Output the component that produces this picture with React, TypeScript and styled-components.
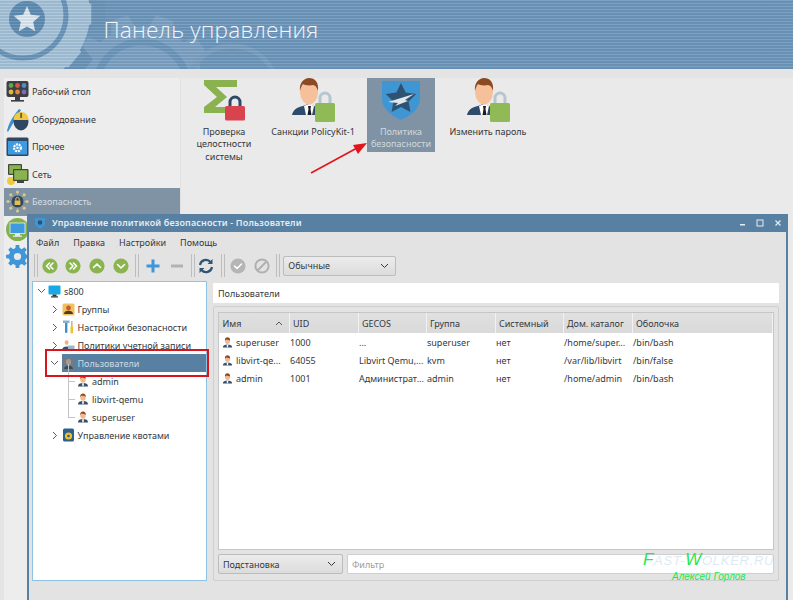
import React from 'react'
import styled, { createGlobalStyle } from 'styled-components'

const GlobalStyle = createGlobalStyle`
	html, body {
		margin: 0;
		padding: 0;
		height: 100%;
		overflow: hidden;
		background: #e4e4e4;
		font-family: 'Noto Sans', 'Open Sans', sans-serif;
		font-size: 9px;
		color: #33383c;
	}
	* { box-sizing: border-box; }
`

const Page = styled.div`
	position: relative;
	width: 793px;
	height: 600px;
	overflow: hidden;
`

/* ---------- header ---------- */
const Header = styled.header`
	position: relative;
	height: 69px;
	background: #6f97ba;
	overflow: hidden;
	display: flex;
	align-items: center;
	padding: 0 0 10px 103.500px;
	&::after {
		content: '';
		position: absolute;
		inset: 0;
		background: repeating-linear-gradient(
			to bottom,
			rgba(255, 255, 255, 0.1) 0 1px,
			rgba(40, 80, 120, 0.1) 1px 3px
		);
	}
`
const HeaderArt = styled.svg`
	position: absolute;
	left: 0;
	top: 0;
`
const HeaderTitle = styled.h1`
	position: relative;
	z-index: 1;
	margin: 0;
	font-family: 'Open Sans', 'Noto Sans', sans-serif;
	font-weight: 300;
	font-size: 22.6px;
	letter-spacing: 0.2px;
	color: #f2f6f9;
`

const gearPath = (cx: number, cy: number, r: number, R: number, n: number) => {
	const pts: string[] = []
	for (let i = 0; i < n; i++) {
		const step = (Math.PI * 2) / n
		const a = i * step
		const at = (rad: number, ang: number) =>
			`${(cx + rad * Math.cos(ang)).toFixed(1)},${(cy + rad * Math.sin(ang)).toFixed(1)}`
		pts.push(at(r, a - step * 0.32), at(R, a - step * 0.2), at(R, a + step * 0.2), at(r, a + step * 0.32))
	}
	return 'M' + pts.join('L') + 'Z'
}

const starPoints = (cx: number, cy: number, R: number, r: number) => {
	const pts: string[] = []
	for (let i = 0; i < 10; i++) {
		const a = -Math.PI / 2 + (i * Math.PI) / 5
		const d = i % 2 ? r : R
		pts.push(`${(cx + d * Math.cos(a)).toFixed(1)},${(cy + d * Math.sin(a)).toFixed(1)}`)
	}
	return pts.join(' ')
}

const HeaderDecor = () => (
	<HeaderArt width="420" height="69" viewBox="0 0 420 69">
		<path d={gearPath(142, 88, 62, 74, 10)} fill="#7ea2c2" />
		<circle cx="142" cy="88" r="46" fill="none" stroke="#6d96b9" strokeWidth="7" />
		<circle cx="232" cy="92" r="46" fill="none" stroke="#7b9fbf" strokeWidth="5" />
		<path d={gearPath(20, 14, 70, 86, 9)} fill="#6b94b7" />
		<circle cx="20" cy="14" r="70" fill="#a9c4d9" />
		<path d={gearPath(20, 14, 62, 72, 9)} fill="#a9c4d9" />
		<circle cx="23" cy="15" r="43" fill="none" stroke="#6a94b8" strokeWidth="5" />
		<circle cx="27" cy="19" r="18" fill="#5f8cb0" />
		<polygon points={starPoints(27, 20, 14, 6.5)} fill="#e1eaf1" />
	</HeaderArt>
)

/* ---------- control panel ---------- */
const Workspace = styled.div`
	display: flex;
	height: 522px;
	margin-top: 9px;
	padding-left: 4px;
`
const Sidebar = styled.nav`
	width: 177px;
	background: #ededed;
	border-right: 1px solid #e2e2e2;
`
const SideRow = styled.div<{ $active?: boolean }>`
	display: flex;
	align-items: center;
	gap: 3px;
	height: 27.5px;
	padding-left: 2px;
	font-size: 9px;
	color: ${p => (p.$active ? '#d5dce2' : '#33383c')};
	background: ${p => (p.$active ? '#7f93a5' : 'transparent')};
`
const Launcher = styled.section`
	flex: 1;
	display: flex;
	align-items: flex-start;
	background: #eaeaea;
	padding-left: 10px;
`
const Tile = styled.div<{ $width: number; $before?: number; $active?: boolean }>`
	width: ${p => p.$width}px;
	margin-left: ${p => p.$before ?? 0}px;
	height: 74px;
	display: flex;
	flex-direction: column;
	align-items: center;
	text-align: center;
	line-height: 12.4px;
	font-size: 9px;
	background: ${p => (p.$active ? '#7f93a5' : 'transparent')};
	color: ${p => (p.$active ? '#d0d8de' : '#33383c')};
	svg { margin-bottom: 4px; flex: none; overflow: visible; }
`

const AgentIcon = () => (
	<svg width="46" height="44" viewBox="0 0 46 44">
		<path d="M2 37c1-5 5-8 11-9l5-2 6 2c3 1 5 2 6 4v5z" fill="#2f4b6b" />
		<path d="M14 28l5-2 5 2-2 9h-6z" fill="#fff" />
		<path d="M18 28h3l-.5 3 1 6h-4l1-6z" fill="#1b1d22" />
		<ellipse cx="19" cy="14" rx="9" ry="12.5" fill="#f6c19a" />
		<path d="M10 13C9 5 14 0 19 0c6 0 10 4 9 13-1-4-3-6-5-6-4 1-9 0-10-1-1 1-2 3-3 7z" fill="#8c4a22" />
		<path d="M30 26v-6a5 5 0 0 1 10 0v6" fill="none" stroke="#b5c6cf" strokeWidth="3" />
		<rect x="25" y="25" width="20" height="19" rx="1.5" fill="#8fba56" />
	</svg>
)

const SigmaIcon = () => (
	<svg width="46" height="44" viewBox="-3 -2 46 44">
		<path d="M0 0h33v7H12l11 10-12 10h10v6H0v-6l13-10L0 5z" fill="#8ab24f" />
		<path d="M26 27v-5a5 5 0 0 1 10 0v5" fill="none" stroke="#2b4a6a" strokeWidth="3" />
		<rect x="21" y="26" width="20" height="14.500" rx="1.5" fill="#d9434e" />
	</svg>
)

const ShieldIcon = () => (
	<svg width="46" height="44" viewBox="0 0 46 44">
		<path d="M4 3h38v18c0 10-10 17-19 21C14 38 4 31 4 21z" fill="#3f96d3" />
		<polygon points={starPoints(23, 21, 16, 8)} fill="#2e5272" />
		<path d="M10 24l26-8-9 6 3 1-13 5 3-3z" fill="#dfe7ec" />
	</svg>
)

/* ---------- sidebar icons ---------- */
const DesktopGlyph = () => (
	<svg width="23" height="23" viewBox="0 0 23 23">
		<rect x="0.5" y="1" width="22" height="16" rx="2" fill="#3d3f45" />
		<rect x="9" y="17" width="5" height="3" fill="#3d3f45" />
		<rect x="5" y="20" width="13" height="1.6" fill="#3d3f45" />
		{['#5fa84b', '#d9574a', '#4a90c8', '#e0b93c', '#e48a35', '#7a6fb5'].map((c, i) => (
			<circle key={c} cx={5 + (i % 3) * 6.5} cy={5.5 + Math.floor(i / 3) * 6.5} r="2.4" fill={c} />
		))}
	</svg>
)
const MouseGlyph = () => (
	<svg width="23" height="27" viewBox="0 0 23 27">
		<path d="M1 25c1-6 5-14 12-22l2 1c-5 8-9 15-13 22z" fill="#3d8fd0" />
		<ellipse cx="15" cy="15.5" rx="7.5" ry="9" fill="#2f4763" />
		<path d="M7.6 14c0-5 3-8 7.4-8s7.4 3 7.4 8z" fill="#f0c93e" />
		<rect x="14.4" y="7" width="1.4" height="5" fill="#2f4763" />
	</svg>
)
const WindowGlyph = () => (
	<svg width="23" height="20" viewBox="0 0 23 20">
		<rect x="0.5" y="0.5" width="22" height="18.5" rx="1.5" fill="#2f4763" />
		<rect x="2" y="4" width="19" height="13.5" fill="#3f9be0" />
		<circle cx="11.5" cy="10.8" r="3.4" fill="none" stroke="#fff" strokeWidth="2.2" strokeDasharray="2 0.8" />
		<circle cx="11.5" cy="10.8" r="1.2" fill="#fff" />
	</svg>
)
const NetworkGlyph = () => (
	<svg width="23" height="23" viewBox="0 0 23 23">
		<circle cx="5" cy="18" r="4" fill="#f0c93e" />
		<rect x="2" y="1" width="14" height="11" rx="1" fill="#3d4a3a" />
		<rect x="3.2" y="2.2" width="11.6" height="8.6" fill="#8ab24f" />
		<rect x="7" y="6" width="15.5" height="12" rx="1" fill="#3d4a3a" />
		<rect x="8.2" y="7.2" width="13" height="9.6" fill="#8ab24f" />
		<rect x="11" y="18" width="7" height="2" fill="#3d4a3a" />
	</svg>
)
const SecurityGlyph = () => (
	<svg width="23" height="23" viewBox="0 0 23 23">
		{[0, 1, 2, 3, 4, 5, 6, 7].map(i => {
			const a = (i * Math.PI) / 4
			return (
				<g key={i}>
					<line
						x1={11.5}
						y1={11.5}
						x2={11.5 + 9.5 * Math.cos(a)}
						y2={11.5 + 9.5 * Math.sin(a)}
						stroke="#c8b77a"
						strokeWidth="0.8"
					/>
					<circle cx={11.5 + 9.5 * Math.cos(a)} cy={11.5 + 9.5 * Math.sin(a)} r="1.6" fill="#d8c88c" />
				</g>
			)
		})}
		<circle cx="11.5" cy="11.5" r="6" fill="#2f4763" />
		<rect x="8.6" y="10.5" width="5.8" height="4.5" fill="#e6c04a" />
		<path d="M9.8 10.5V9a1.7 1.7 0 0 1 3.4 0v1.5" fill="none" stroke="#e6c04a" strokeWidth="1" />
	</svg>
)
const MonitorGlyph = () => (
	<svg width="23" height="23" viewBox="0 0 23 23">
		<circle cx="11.5" cy="11.5" r="11.5" fill="#83b04c" />
		<rect x="4" y="5" width="15" height="10.5" fill="#3f9be0" stroke="#e8eef2" strokeWidth="0.8" />
		<rect x="9" y="15.5" width="5" height="2.4" fill="#e8eef2" />
		<rect x="7" y="17.6" width="9" height="1.2" fill="#e8eef2" />
	</svg>
)
const GearGlyph = () => (
	<svg width="23" height="23" viewBox="0 0 23 23">
		<path d={gearPath(11.5, 11.5, 8.5, 11.5, 8)} fill="#3f96d9" />
		<circle cx="11.5" cy="11.5" r="8.6" fill="#3f96d9" />
		<circle cx="11.5" cy="11.5" r="3.6" fill="#e9e9e9" />
	</svg>
)

/* ---------- policy window ---------- */
const PolicyWindow = styled.div`
	position: absolute;
	left: 27px;
	top: 214px;
	width: 761px;
	height: 390px;
	background: #e3e3e3;
	border: 2px solid #5880a3;
	border-top: none;
	display: flex;
	flex-direction: column;
`
const TitleBar = styled.div`
	height: 18px;
	flex: none;
	margin: 0 -2px;
	background: #5880a3;
	color: #e6edf2;
	display: flex;
	align-items: center;
	padding: 0 6px 1px 7px;
	font-size: 9px;
	font-weight: 600;
	letter-spacing: 0.14px;
	gap: 6px;
`
const WindowControls = styled.div`
	margin-left: auto;
	display: flex;
	align-items: center;
	gap: 10px;
	color: #e6edf2;
	svg { display: block; }
`
const MenuBar = styled.div`
	height: 20px;
	flex: none;
	display: flex;
	align-items: center;
	padding-left: 7px;
	gap: 14px;
	font-size: 9px;
`
const Toolbar = styled.div`
	height: 28px;
	flex: none;
	display: flex;
	align-items: center;
	padding: 0 0 1px 3px;
`
const Grip = styled.span`
	width: 4px;
	height: 23px;
	border-left: 1px solid #bdbdbd;
	border-right: 1px solid #bdbdbd;
	margin-left: 2px;
	flex: none;
`
const ToolButton = styled.span`
	width: 23.6px;
	height: 24px;
	flex: none;
	display: flex;
	align-items: center;
	justify-content: center;
`
const ToolGroup = styled.div<{ $lead?: number; $trail?: number }>`
	display: flex;
	align-items: center;
	padding-left: ${p => p.$lead ?? 0}px;
	padding-right: ${p => p.$trail ?? 1}px;
`
const Dropdown = styled.div<{ $width: number; $before?: number }>`
	width: ${p => p.$width}px;
	height: 20px;
	flex: none;
	margin-left: ${p => p.$before ?? 0}px;
	display: flex;
	align-items: center;
	justify-content: space-between;
	padding: 0 6px 0 4px;
	background: linear-gradient(#ececec, #dcdcdc);
	border: 1px solid #bcbcbc;
	border-radius: 2px;
	font-size: 9px;
`
const Split = styled.div`
	display: flex;
	gap: 6px;
	padding: 1px 7px 0 3px;
`
const TreePane = styled.div`
	width: 175px;
	height: 300px;
	flex: none;
	background: #fff;
	border: 1px solid #8fc3e6;
`
const TreeRow = styled.div<{ $level: number }>`
	height: 18px;
	display: flex;
	align-items: center;
	gap: 2px;
	padding-left: ${p => 3 + p.$level * 13.5}px;
	font-size: 9px;
	color: #33383c;
`
const Chevron = styled.span`
	width: 10px;
	flex: none;
	display: flex;
	justify-content: center;
	color: #55595d;
	svg { display: block; }
`
const TreeText = styled.span`
	margin-left: 1px;
	white-space: nowrap;
`
const TreeLabel = styled.span`
	display: flex;
	align-items: center;
	gap: 3px;
	height: 18px;
	flex: 1;
	background: #5880a3;
	color: #cfdae3;
`
const Leaf = styled.span`
	position: relative;
	width: 7px;
	height: 1px;
	background: #c4c4c4;
	flex: none;
	margin-left: 5px;
	&::before {
		content: '';
		position: absolute;
		left: 0;
		bottom: 0;
		width: 1px;
		height: 18px;
		background: #c4c4c4;
	}
`
const Highlight = styled.div`
	position: absolute;
	left: 45px;
	top: 349px;
	width: 164px;
	height: 28px;
	border: 2px solid #d8141c;
`
const RightPane = styled.div`
	flex: 1;
	display: flex;
	flex-direction: column;
	gap: 3px;
	padding-top: 2px;
`
const PathField = styled.div`
	height: 20px;
	background: #fff;
	border-radius: 1px;
	display: flex;
	align-items: center;
	padding-left: 5px;
	font-size: 9px;
`
const GroupBox = styled.div`
	height: 275px;
	border: 1px solid #cfcfcf;
	border-radius: 2px;
	padding: 5px 4px 0;
	display: flex;
	flex-direction: column;
	gap: 4px;
`
const TableFrame = styled.div`
	height: 238px;
	background: #fff;
	border: 1px solid #c6c6c6;
	flex: none;
`
const UsersTable = styled.table`
	width: 100%;
	table-layout: fixed;
	border-collapse: collapse;
	font-size: 9px;
`
const HeadCell = styled.th`
	height: 20px;
	padding: 0 0 0 3.500px;
	background: linear-gradient(#e0e0e0, #d9d9d9);
	border-right: 1px solid #f2f2f2;
	font-weight: 400;
	text-align: left;
	color: #33383c;
	white-space: nowrap;
`
const HeadInner = styled.span`
	display: flex;
	justify-content: space-between;
	align-items: center;
	padding-right: 6px;
`
const BodyCell = styled.td`
	height: 18px;
	padding: 0 0 0 1px;
	white-space: nowrap;
	overflow: hidden;
	&:first-child { padding-left: 3px; }
`
const NameCell = styled.span`
	display: flex;
	align-items: center;
	gap: 3px;
`
const Footer = styled.div`
	display: flex;
	gap: 4px;
`
const FilterField = styled.div`
	flex: 1;
	height: 20px;
	background: #fff;
	border: 1px solid #cfcfcf;
	border-radius: 2px;
	display: flex;
	align-items: center;
	padding-left: 4px;
	color: #9b9b9b;
	font-size: 9px;
`

/* ---------- overlays ---------- */
const ArrowArt = styled.svg`
	position: absolute;
	left: 305px;
	top: 138px;
`
const Watermark = styled.div`
	position: absolute;
	left: 643px;
	top: 551px;
	font-family: 'Liberation Sans', sans-serif;
	font-style: italic;
	font-size: 13px;
	line-height: 18px;
	letter-spacing: 0.7px;
	color: rgba(190, 215, 235, 0.55);
	white-space: nowrap;
`
const WatermarkLead = styled.span`
	color: #22e84f;
	font-size: 17px;
`
const Signature = styled.div`
	position: absolute;
	left: 672px;
	top: 571px;
	font-family: 'Liberation Sans', sans-serif;
	font-style: italic;
	font-size: 10px;
	color: #22e84f;
	white-space: nowrap;
`

const Person = ({ size = 12 }: { size?: number }) => (
	<svg width={size} height={size} viewBox="0 0 12 12" style={{ flex: 'none' }}>
		<path d="M1 11.5c0-2.6 2-3.4 5-3.4s5 .8 5 3.4z" fill="#34506c" />
		<path d="M5 8.2h2l-.4 3H5.4z" fill="#fff" />
		<ellipse cx="6" cy="4.4" rx="2.7" ry="3.3" fill="#f2b98f" />
		<path d="M3.2 4c-.2-2.4 1.2-3.6 2.8-3.6S9 1.6 8.8 4C8 3 6 3 5 2.6 4.4 3 3.8 3.2 3.2 4z" fill="#8c4a22" />
	</svg>
)

const TreeGlyph = ({ kind }: { kind: string }) => {
	if (kind === 'host')
		return (
			<svg width="13" height="13" viewBox="0 0 13 13">
				<rect x="0.5" y="0.5" width="12" height="9" rx="1" fill="#17a8e6" />
				<rect x="4.5" y="9.5" width="4" height="2" fill="#333" />
				<rect x="3" y="11.3" width="7" height="1.2" fill="#333" />
			</svg>
		)
	if (kind === 'groups')
		return (
			<svg width="13" height="13" viewBox="0 0 13 13">
				<rect x="0.5" y="0.5" width="12" height="12" rx="1.5" fill="#efc35a" />
				<circle cx="6.5" cy="5" r="2.4" fill="#c9573c" />
				<path d="M2 11c0-2.4 2-3.2 4.5-3.2S11 8.6 11 11z" fill="#54382c" />
			</svg>
		)
	if (kind === 'tools')
		return (
			<svg width="13" height="14" viewBox="0 0 13 14">
				<rect x="3" y="1" width="2.4" height="12" rx="1" fill="#3f8fd0" />
				<rect x="1" y="0.5" width="6.5" height="2.5" fill="#8ab0cf" />
				<rect x="8.5" y="6" width="2.6" height="7.5" rx="1" fill="#f0c12e" />
				<rect x="9" y="1" width="1.6" height="5" fill="#b8b8b8" />
			</svg>
		)
	if (kind === 'account')
		return (
			<svg width="13" height="13" viewBox="0 0 14 13">
				<ellipse cx="5" cy="3.4" rx="2.1" ry="2.6" fill="#e9b48c" />
				<path d="M0 12c0-3 2-4.4 5-4.4s5 1.4 5 4.4z" fill="#34506c" />
				<rect x="6.5" y="6.5" width="7" height="5" fill="#9fb6c8" />
			</svg>
		)
	if (kind === 'users')
		return (
			<svg width="13" height="13" viewBox="0 0 13 13">
				<rect x="0.5" y="0.5" width="12" height="12" rx="1.5" fill="#6d7c8a" />
				<ellipse cx="6.5" cy="5" rx="2.6" ry="3" fill="#a89a8c" />
				<path d="M2 12c0-2.4 2-3.2 4.5-3.2S11 9.6 11 12z" fill="#3d4a58" />
			</svg>
		)
	return (
		<svg width="13" height="14" viewBox="0 0 13 14">
			<rect x="1" y="0.5" width="11" height="13" rx="1.5" fill="#2f5f8c" />
			<circle cx="6.5" cy="8" r="3.6" fill="#f0c12e" />
			<circle cx="6.5" cy="8" r="1.3" fill="#2f5f8c" />
		</svg>
	)
}

const Down = () => (
	<svg width="9" height="6" viewBox="0 0 9 6">
		<path d="M1 1l3.5 3.5L8 1" fill="none" stroke="currentColor" strokeWidth="1" />
	</svg>
)
const Right = () => (
	<svg width="6" height="9" viewBox="0 0 6 9">
		<path d="M1 1l3.5 3.5L1 8" fill="none" stroke="currentColor" strokeWidth="1" />
	</svg>
)

const RoundTool = ({ d, fill = '#8ab54e' }: { d: string; fill?: string }) => (
	<svg width="16" height="16" viewBox="0 0 16 16">
		<circle cx="8" cy="8" r="7.6" fill={fill} />
		<path d={d} fill="none" stroke="#fff" strokeWidth="1.6" strokeLinecap="round" strokeLinejoin="round" />
	</svg>
)

const columns = [70, 69, 68, 69, 68, 69]
const heads = ['UID', 'GECOS', 'Группа', 'Системный', 'Дом. каталог', 'Оболочка']
const users = [
	['superuser', '1000', '...', 'superuser', 'нет', '/home/super...', '/bin/bash'],
	['libvirt-qe...', '64055', 'Libvirt Qemu,...', 'kvm', 'нет', '/var/lib/libvirt', '/bin/false'],
	['admin', '1001', 'Администрат...', 'admin', 'нет', '/home/admin', '/bin/bash'],
]

export default function App() {
	return (
		<Page>
			<GlobalStyle />
			<Header>
				<HeaderDecor />
				<HeaderTitle>Панель управления</HeaderTitle>
			</Header>

			<Workspace>
				<Sidebar>
					<SideRow><DesktopGlyph />Рабочий стол</SideRow>
					<SideRow><MouseGlyph />Оборудование</SideRow>
					<SideRow><WindowGlyph />Прочее</SideRow>
					<SideRow><NetworkGlyph />Сеть</SideRow>
					<SideRow $active><SecurityGlyph />Безопасность</SideRow>
					<SideRow><MonitorGlyph /></SideRow>
					<SideRow><GearGlyph /></SideRow>
				</Sidebar>
				<Launcher>
					<Tile $width={66}><SigmaIcon />Проверка целостности системы</Tile>
					<Tile $width={86} $before={13}><AgentIcon />Санкции PolicyKit-1</Tile>
					<Tile $width={68} $before={11} $active><ShieldIcon />Политика безопасности</Tile>
					<Tile $width={84} $before={11}><AgentIcon />Изменить пароль</Tile>
				</Launcher>
			</Workspace>

			<ArrowArt width="70" height="40" viewBox="0 0 70 40">
				<line x1="6" y1="35" x2="52" y2="10" stroke="#e2141c" strokeWidth="1.6" />
				<path d="M62 5L48 7l5 9z" fill="#e2141c" />
			</ArrowArt>

			<PolicyWindow>
				<TitleBar>
					<svg width="12" height="12" viewBox="0 0 12 12">
						<path d="M1 1h10v5c0 3-3 4.600-5 5.500C4 10.600 1 9 1 6z" fill="#3f96d3" />
						<circle cx="6" cy="5.500" r="2.300" fill="#2e5272" />
					</svg>
					Управление политикой безопасности - Пользователи
					<WindowControls>
						<svg width="7" height="7" viewBox="0 0 7 7"><rect x="1" y="5" width="5" height="1.500" fill="currentColor" /></svg>
						<svg width="8" height="8" viewBox="0 0 8 8"><rect x="1" y="1" width="6" height="6" fill="none" stroke="currentColor" /></svg>
						<svg width="8" height="8" viewBox="0 0 8 8"><path d="M1.500 1.500l5 5M6.500 1.500l-5 5" stroke="currentColor" strokeWidth="1.200" /></svg>
					</WindowControls>
				</TitleBar>
				<MenuBar>
					<span>Файл</span>
					<span>Правка</span>
					<span>Настройки</span>
					<span>Помощь</span>
				</MenuBar>
				<Toolbar>
					<Grip />
					<ToolGroup>
						<ToolButton><RoundTool d="M7.500 5L4.500 8l3 3M11 5L8 8l3 3" /></ToolButton>
						<ToolButton><RoundTool d="M5 5l3 3-3 3M8.500 5l3 3-3 3" /></ToolButton>
						<ToolButton><RoundTool d="M4.500 9.500L8 6l3.500 3.500" /></ToolButton>
						<ToolButton><RoundTool d="M4.500 6.500L8 10l3.500-3.500" /></ToolButton>
					</ToolGroup>
					<Grip />
					<ToolGroup $lead={2} $trail={0}>
						<ToolButton>
							<svg width="14" height="14" viewBox="0 0 14 14"><path d="M7 0.500v13M0.500 7h13" stroke="#3f96d9" strokeWidth="3" /></svg>
						</ToolButton>
						<ToolButton>
							<svg width="14" height="14" viewBox="0 0 14 14"><path d="M1 7h12" stroke="#b2b2b2" strokeWidth="3" /></svg>
						</ToolButton>
					</ToolGroup>
					<Grip />
					<ToolGroup>
						<ToolButton>
							<svg width="16" height="16" viewBox="0 0 16 16">
								<path d="M2 7a6 6 0 0 1 10.500-3M14 9a6 6 0 0 1-10.500 3" fill="none" stroke="#2f5573" strokeWidth="2.200" />
								<path d="M14.500 1v5h-5zM1.500 15v-5h5z" fill="#2f5573" />
							</svg>
						</ToolButton>
					</ToolGroup>
					<Grip />
					<ToolGroup $lead={1}>
						<ToolButton><RoundTool fill="#b5b5b5" d="M4.500 8l2.500 2.500 4.500-4.500" /></ToolButton>
						<ToolButton>
							<svg width="16" height="16" viewBox="0 0 16 16">
								<circle cx="8" cy="8" r="6.600" fill="none" stroke="#b0b0b0" strokeWidth="2" />
								<path d="M3.500 12.500l9-9" stroke="#b0b0b0" strokeWidth="2" />
							</svg>
						</ToolButton>
					</ToolGroup>
					<Grip />
					<Dropdown $width={113} $before={3}>Обычные<Down /></Dropdown>
				</Toolbar>
				<Split>
					<TreePane>
						<TreeRow $level={0}><Chevron><Down /></Chevron><TreeGlyph kind="host" /><TreeText>s800</TreeText></TreeRow>
						<TreeRow $level={1}><Chevron><Right /></Chevron><TreeGlyph kind="groups" /><TreeText>Группы</TreeText></TreeRow>
						<TreeRow $level={1}><Chevron><Right /></Chevron><TreeGlyph kind="tools" /><TreeText>Настройки безопасности</TreeText></TreeRow>
						<TreeRow $level={1}><Chevron><Right /></Chevron><TreeGlyph kind="account" /><TreeText>Политики учетной записи</TreeText></TreeRow>
						<TreeRow $level={1}>
							<Chevron><Down /></Chevron>
							<TreeLabel><TreeGlyph kind="users" />Пользователи</TreeLabel>
						</TreeRow>
						<TreeRow $level={2}><Leaf /><Person /><TreeText>admin</TreeText></TreeRow>
						<TreeRow $level={2}><Leaf /><Person /><TreeText>libvirt-qemu</TreeText></TreeRow>
						<TreeRow $level={2}><Leaf /><Person /><TreeText>superuser</TreeText></TreeRow>
						<TreeRow $level={1}><Chevron><Right /></Chevron><TreeGlyph kind="quota" /><TreeText>Управление квотами</TreeText></TreeRow>
					</TreePane>
					<RightPane>
						<PathField>Пользователи</PathField>
						<GroupBox>
							<TableFrame>
								<UsersTable>
									<colgroup>
										{columns.map((w, i) => <col key={i} style={{ width: w }} />)}
										<col />
									</colgroup>
									<thead>
										<tr>
											<HeadCell>
												<HeadInner>
													Имя
													<svg width="8" height="5" viewBox="0 0 8 5"><path d="M1 4l3-3 3 3" fill="none" stroke="#55595d" /></svg>
												</HeadInner>
											</HeadCell>
											{heads.map(h => <HeadCell key={h}>{h}</HeadCell>)}
										</tr>
									</thead>
									<tbody>
										{users.map(row => (
											<tr key={row[0]}>
												{row.map((cell, i) => (
													<BodyCell key={i}>
														{i === 0 ? <NameCell><Person size={11} />{cell}</NameCell> : cell}
													</BodyCell>
												))}
											</tr>
										))}
									</tbody>
								</UsersTable>
							</TableFrame>
							<Footer>
								<Dropdown $width={125}>Подстановка<Down /></Dropdown>
								<FilterField>Фильтр</FilterField>
							</Footer>
						</GroupBox>
					</RightPane>
				</Split>
			</PolicyWindow>

			<Highlight />
			<Watermark><WatermarkLead>F</WatermarkLead>AST-<WatermarkLead>W</WatermarkLead>OLKER.RU</Watermark>
			<Signature>Алексей Горлов</Signature>
		</Page>
	)
}
